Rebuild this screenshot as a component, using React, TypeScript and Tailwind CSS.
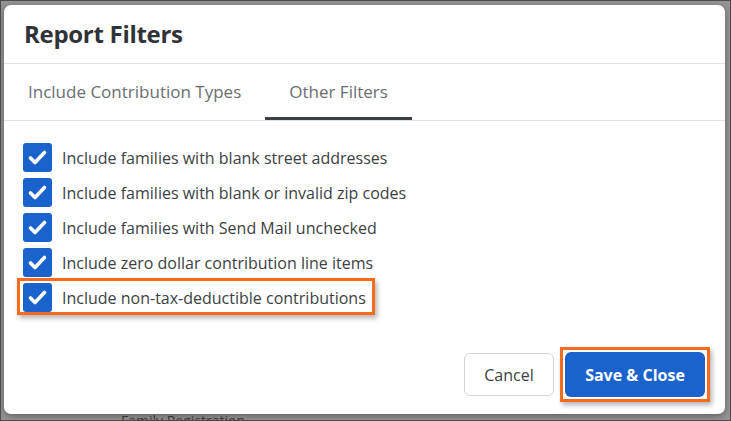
import React, { useState } from 'react';

const filters = [
    'Include families with blank street addresses',
    'Include families with blank or invalid zip codes',
    'Include families with Send Mail unchecked',
    'Include zero dollar contribution line items',
    'Include non-tax-deductible contributions',
];

function CheckBox({ checked }: { checked: boolean }) {
    return (
        <span className="flex h-[29px] w-[29px] shrink-0 items-center justify-center rounded-[3px] bg-[#1b63cc]">
            {checked && (
                <svg width="29" height="29" viewBox="0 0 29 29" fill="none">
                    <path d="M7.5 15l4.5 4.5L21.5 9.5" stroke="white" strokeWidth="3.6" strokeLinecap="round" strokeLinejoin="round" />
                </svg>
            )}
        </span>
    );
}

export default function App() {
    const [tab, setTab] = useState(1);
    const [checked, setChecked] = useState(filters.map(() => true));

    return (
        <div className="relative h-[421px] w-[731px] overflow-hidden border border-[#4b4b4b] bg-[#939393] font-['Open_Sans','Liberation_Sans',sans-serif]">
            {/* page behind the overlay */}
            <div className="absolute left-[120px] top-[412px] flex items-center gap-2 text-[14px] leading-[16px] text-[#3d3d3d]">
                <span>Family Registration *</span>
                <span className="h-px w-[480px] bg-[#5c5c5c]" />
            </div>

            <div className="absolute left-[3px] top-[4px] flex h-[409px] w-[721px] flex-col rounded-[7px] bg-white shadow-[0_2px_6px_rgba(0,0,0,0.35)]">
                <div className="flex h-[59px] shrink-0 items-center border-b border-[#e3e3e3] px-[20px]">
                    <h3 className="text-[24px] font-bold tracking-[-0.3px] text-[#2f3237]">Report Filters</h3>
                </div>

                <div className="flex h-[57px] shrink-0 border-b border-[#e3e3e3]">
                    {['Include Contribution Types', 'Other Filters'].map((t, i) => (
                        <button
                            key={t}
                            type="button"
                            onClick={() => setTab(i)}
                            className={`flex h-full items-center border-b-[3px] px-6 pt-[3px] text-[17px] text-[#6a6e73] ${tab === i ? 'border-[#3c3f44]' : 'border-transparent'}`}
                        >
                            {t}
                        </button>
                    ))}
                </div>

                <div className="flex flex-col gap-[6px] pl-[19px] pt-[22px]">
                    {filters.map((f, i) => (
                        <label
                            key={f}
                            className="relative flex items-center gap-[10px] text-[16px] text-[#3c3f44]"
                            onClick={() => setChecked(checked.map((c, j) => (j === i ? !c : c)))}
                        >
                            <CheckBox checked={checked[i]} />
                            <span>{f}</span>
                            {i === filters.length - 1 && (
                                <span className="pointer-events-none absolute -left-[6px] -top-[5px] h-[37px] w-[358px] border-[3px] border-[#f76b1c] shadow-[2px_3px_5px_rgba(0,0,0,0.3)]" />
                            )}
                        </label>
                    ))}
                </div>

                <div className="mt-auto flex items-center justify-end gap-[11px] pb-[17px] pr-[20px]">
                    <button type="button" className="h-[43px] w-[90px] rounded-[6px] border border-[#d5d5d5] text-[16px] font-medium text-[#3c3f44]">
                        Cancel
                    </button>
                    <div className="relative">
                        <button type="button" className="h-[45px] w-[140px] rounded-[6px] bg-[#1b63cc] text-[16px] font-bold text-white">
                            Save &amp; Close
                        </button>
                        <span className="pointer-events-none absolute -inset-[5px] border-[3px] border-[#f76b1c] shadow-[2px_3px_5px_rgba(0,0,0,0.3)]" />
                    </div>
                </div>
            </div>
        </div>
    );
}
